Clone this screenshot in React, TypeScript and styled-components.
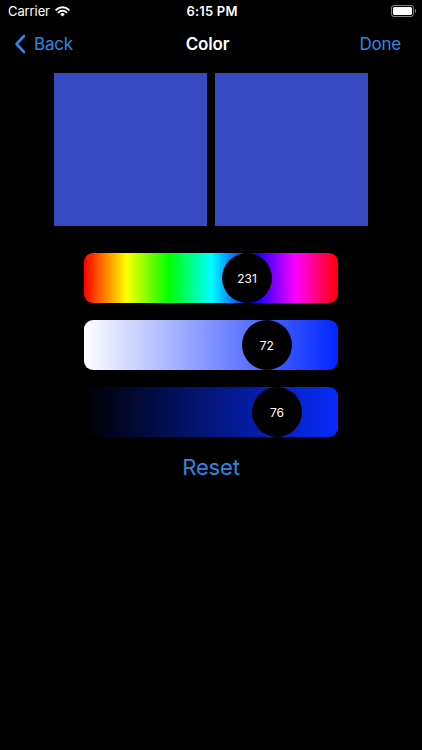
import React from 'react';
import styled, {createGlobalStyle} from 'styled-components';

const GlobalStyle = createGlobalStyle`
    html, body {
        margin: 0;
        padding: 0;
        background: #000;
    }
    body {
        font-family: Inter, "Liberation Sans", sans-serif;
        -webkit-font-smoothing: antialiased;
    }
`;

const BLUE = '#2f88e0';

const HUE = 231;
const SAT = 72;
const BRI = 76;

const hsv = (h: number, s: number, v: number) => {
    const f = (n: number) => {
        const k = (n + h / 60) % 6;
        return Math.round(255 * v * (1 - s * Math.max(0, Math.min(k, 4 - k, 1))));
    };
    return `rgb(${f(5)}, ${f(3)}, ${f(1)})`;
};

const App = () => {
    const swatch = hsv(HUE, SAT / 100, BRI / 100);
    const satEnd = hsv(HUE, 1, 1);
    const briEnd = hsv(HUE, 0.97, 0.98);

    return (
        <Screen>
            <GlobalStyle/>
            <StatusBar>
                <Carrier>
                    Carrier
                    <WifiIcon/>
                </Carrier>
                <Clock>6:15 PM</Clock>
                <Battery>
                    <BatteryBody><BatteryFill/></BatteryBody>
                    <BatteryNub/>
                </Battery>
            </StatusBar>
            <NavBar>
                <NavButton>
                    <svg width="12" height="20" viewBox="0 0 12 20">
                        <path d="M10 2 L2.5 10 L10 18" fill="none" stroke={BLUE} strokeWidth="2.6" strokeLinecap="round" strokeLinejoin="round"/>
                    </svg>
                    <span>Back</span>
                </NavButton>
                <NavTitle>Color</NavTitle>
                <NavButton $right>Done</NavButton>
            </NavBar>
            <Swatches>
                <Swatch $color={swatch}/>
                <Swatch $color={swatch}/>
            </Swatches>
            <Sliders>
                <Slider
                    background="linear-gradient(to right, #f00 0%, #ff0 16.67%, #0f0 33.33%, #0ff 50%, #00f 66.67%, #f0f 83.33%, #f00 100%)"
                    fraction={HUE / 360}
                    label={String(HUE)}
                />
                <Slider
                    background={`linear-gradient(to right, #fff 0%, ${satEnd} 100%)`}
                    fraction={SAT / 100}
                    label={String(SAT)}
                />
                <Slider
                    background={`linear-gradient(to right, #000 0%, ${briEnd} 100%)`}
                    fraction={BRI / 100}
                    label={String(BRI)}
                />
            </Sliders>
            <ResetButton>Reset</ResetButton>
        </Screen>
    );
};

interface SliderProps {
    background: string;
    fraction: number;
    label: string;
}

const Slider = ({background, fraction, label}: SliderProps) => (
    <Track style={{background}}>
        <Knob style={{left: `${fraction * 100}%`}}>{label}</Knob>
    </Track>
);

const WifiIcon = () => (
    <WifiSvg width="15" height="11" viewBox="0 0 15 11">
        <path d="M7.5 10.6 L5.2 8.2 A3.3 3.3 0 0 1 9.8 8.2 Z" fill="#fff"/>
        <path d="M3.5 6.4 A5.7 5.7 0 0 1 11.5 6.4" fill="none" stroke="#fff" strokeWidth="2" strokeLinecap="round"/>
        <path d="M1.2 3.9 A8.9 8.9 0 0 1 13.8 3.9" fill="none" stroke="#fff" strokeWidth="2" strokeLinecap="round"/>
    </WifiSvg>
);

const Screen = styled.div`
    width: 422px;
    height: 750px;
    background: #000;
    display: flex;
    flex-direction: column;
    color: #fff;
    overflow: hidden;
`;

const StatusBar = styled.div`
    height: 22px;
    display: grid;
    grid-template-columns: 1fr auto 1fr;
    align-items: center;
    padding: 0 6px 0 8px;
    font-size: 13px;
`;

const Carrier = styled.div`
    display: flex;
    align-items: center;
    font-weight: 400;
    letter-spacing: -0.1px;
`;

const WifiSvg = styled.svg`
    margin-left: 5px;
`;

const Clock = styled.div`
    font-weight: 600;
    letter-spacing: 0.2px;
`;

const Battery = styled.div`
    justify-self: end;
    display: flex;
    align-items: center;
`;

const BatteryBody = styled.div`
    width: 19px;
    height: 8px;
    border: 1px solid rgba(255, 255, 255, 0.5);
    border-radius: 3px;
    padding: 1px;
`;

const BatteryFill = styled.div`
    width: 100%;
    height: 100%;
    background: #fff;
    border-radius: 1.5px;
`;

const BatteryNub = styled.div`
    width: 1.5px;
    height: 4px;
    margin-left: 1px;
    background: rgba(255, 255, 255, 0.5);
    border-radius: 0 1px 1px 0;
`;

const NavBar = styled.div`
    height: 44px;
    display: grid;
    grid-template-columns: 1fr auto 1fr;
    align-items: center;
    padding: 0 21px 0 14px;
`;

const NavButton = styled.div<{$right?: boolean}>`
    justify-self: ${(p) => (p.$right ? 'end' : 'start')};
    display: flex;
    align-items: center;
    gap: 8px;
    color: ${BLUE};
    font-size: 17px;
    letter-spacing: -0.2px;
`;

const NavTitle = styled.div`
    font-size: 17px;
    font-weight: 600;
    letter-spacing: -0.2px;
`;

const Swatches = styled.div`
    display: flex;
    justify-content: center;
    gap: 8px;
    margin-top: 7px;
`;

const Swatch = styled.div<{$color: string}>`
    width: 153px;
    height: 153px;
    background: ${(p) => p.$color};
`;

const Sliders = styled.div`
    display: flex;
    flex-direction: column;
    gap: 17px;
    margin: 27px auto 0;
    width: 254px;
`;

const Track = styled.div`
    position: relative;
    height: 50px;
    border-radius: 9px;
`;

const Knob = styled.div`
    position: absolute;
    top: 0;
    width: 50px;
    height: 50px;
    margin-left: -25px;
    border-radius: 50%;
    background: #000;
    color: #fff;
    font-size: 12px;
    display: flex;
    align-items: center;
    justify-content: center;
`;

const ResetButton = styled.div`
    align-self: center;
    margin-top: 17px;
    color: ${BLUE};
    font-size: 22px;
    letter-spacing: -0.2px;
`;

export default App;
